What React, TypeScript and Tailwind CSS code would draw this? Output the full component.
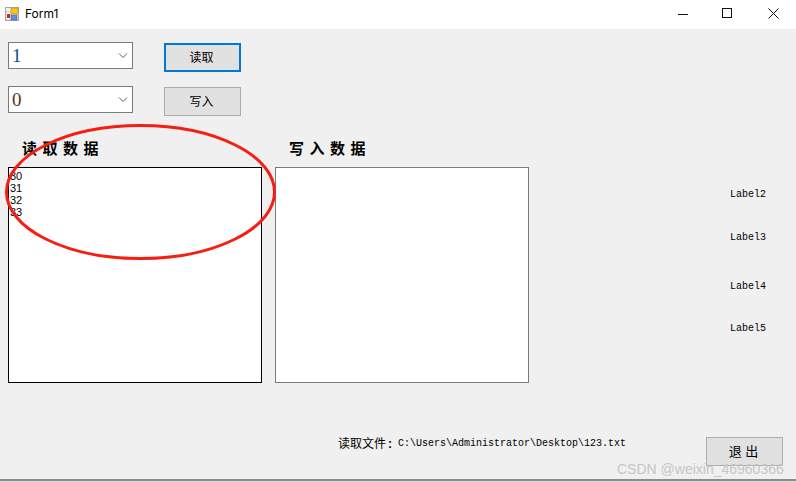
const cjk = "font-['Liberation_Sans','Noto_Sans_CJK_SC',sans-serif]";
const mono = "font-['Liberation_Mono','Noto_Sans_CJK_SC',monospace]";

function Combo({ value, color }: { value: string; color: string }) {
  return (
    <div className="flex h-[27px] w-[125px] items-center justify-between border border-[#7a7a7a] bg-white pl-[3px] pr-[4px]">
      <span className={`text-[19px] leading-none ${color} font-['Liberation_Serif',serif]`}>{value}</span>
      <svg width="10" height="7" viewBox="0 0 10 7" fill="none" stroke="#606060" strokeWidth="1">
        <path d="M1 1.5 5 5.5l4-4" />
      </svg>
    </div>
  );
}

function Btn({ text, cls }: { text: string; cls: string }) {
  return (
    <div className={`flex w-[77px] items-center justify-center bg-[#e1e1e1] pr-[2px] text-black ${cjk} ${cls}`}>
      {text}
    </div>
  );
}

function WinIcon() {
  return (
    <svg width="14" height="14" viewBox="0 0 14 14" className="mb-[2px] ml-[5px]">
      <rect x="0.5" y="0.5" width="13" height="13" fill="#f1f1f1" stroke="#a8a8a8" />
      <rect x="1" y="5" width="5" height="8" fill="#fff" stroke="#9a9a9a" strokeWidth="0.5" />
      <rect x="2" y="7" width="3" height="4" fill="#c8261f" />
      <rect x="6" y="1" width="7" height="6" fill="#f5c518" stroke="#b88a10" strokeWidth="0.6" />
      <rect x="6" y="8" width="6" height="5" fill="#5f8fdc" stroke="#3a66b0" strokeWidth="0.6" />
    </svg>
  );
}

export default function App() {
  return (
    <div className="relative flex h-[482px] w-[796px] flex-col overflow-hidden bg-[#f0f0f0]">
      {/* Title bar */}
      <div className="flex h-[29px] items-center bg-white">
        <WinIcon />
        <span className="mb-[1px] ml-[6px] text-[12px] text-black font-['Inter','Liberation_Sans',sans-serif]">Form1</span>
        <div className="ml-auto flex items-center pb-[2px]">
          <div className="flex w-[45px] justify-center">
            <svg width="10" height="11" viewBox="0 0 10 11" stroke="#111" fill="none"><path d="M0 6.5h10" /></svg>
          </div>
          <div className="flex w-[45px] justify-center">
            <svg width="11" height="11" viewBox="0 0 11 11" stroke="#111" fill="none"><rect x="0.5" y="0.5" width="9" height="9" /></svg>
          </div>
          <div className="flex w-[46px] justify-center">
            <svg width="11" height="11" viewBox="0 0 11 11" stroke="#111" fill="none"><path d="M0.5 0.5l10 10M10.5 0.5l-10 10" /></svg>
          </div>
        </div>
      </div>

      {/* Body */}
      <div className="flex flex-1 flex-col px-[8px]">
        <div className="mt-[13px] flex items-start">
          <Combo value="1" color="text-[#0b4f8f]" />
          <Btn text="读取" cls="ml-[31px] mt-[1px] h-[29px] border-2 border-[#0078d7] text-[12px]" />
        </div>
        <div className="mt-[14px] flex items-start">
          <Combo value="0" color="text-[#5a3210]" />
          <Btn text="写入" cls="ml-[31px] mt-[1px] h-[29px] border border-[#adadad] text-[12px]" />
        </div>

        <div className="mt-[20px] flex">
          <div className="w-[267px] pl-[14px]">
            <span className={`text-[15px] leading-[16px] font-bold tracking-[5.5px] text-black ${cjk}`}>读取数据</span>
          </div>
          <div className="pl-[14px]">
            <span className={`text-[15px] leading-[16px] font-bold tracking-[5.5px] text-black ${cjk}`}>写入数据</span>
          </div>
        </div>

        <div className="mt-[7px] flex">
          <div className="h-[216px] w-[254px] border border-black bg-white pl-[1px] pt-[2px] text-[11px] leading-[12px] text-black font-['Liberation_Sans',sans-serif]">
            <div>30</div>
            <div>31</div>
            <div>32</div>
            <div>33</div>
          </div>
          <div className="ml-[13px] h-[216px] w-[254px] border border-[#7a7a7a] bg-white" />
          <div className={`ml-[201px] flex flex-col pt-[20px] text-[10px] leading-[12px] text-black ${mono}`}>
            <span className="mt-[2px]">Label2</span>
            <span className="mt-[31px]">Label3</span>
            <span className="mt-[37px]">Label4</span>
            <span className="mt-[30px]">Label5</span>
          </div>
        </div>

        <div className="mt-[54px] flex items-start">
          <div className="ml-[330px] flex items-center text-black">
            <span className={`flex w-[60px] text-[12px] leading-[14px] ${cjk}`}>
              读取文件<span className="ml-[2px] font-bold">:</span>
            </span>
            <span className={`text-[10px] leading-[14px] ${mono}`}>C:\Users\Administrator\Desktop\123.txt</span>
          </div>
          <Btn text="退 出" cls="ml-auto mr-[5px] h-[29px] border border-[#adadad] text-[13px]" />
        </div>
      </div>

      <div className="h-[3px] border-t-2 border-[#8c8c8c] bg-[#d8d8d8]" />

      {/* Red annotation */}
      <svg className="pointer-events-none absolute left-0 top-0" width="796" height="482" fill="none">
        <ellipse cx="140.5" cy="192" rx="134" ry="66.5" stroke="#f61e12" strokeWidth="3" />
      </svg>

      {/* Watermark */}
      <span className="absolute left-[617px] top-[461px] text-[14px] leading-[16px] text-[#c6c6c6] font-['Liberation_Sans',sans-serif]">
        CSDN @weixin_46960366
      </span>
    </div>
  );
}
